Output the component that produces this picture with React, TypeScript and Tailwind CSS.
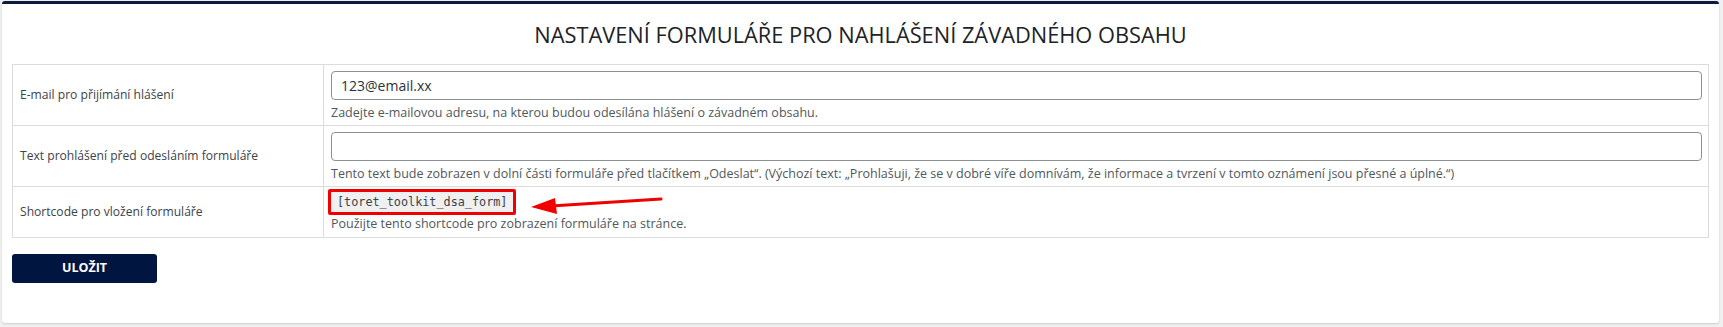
import React from 'react';

const rows = [
  {
    label: 'E-mail pro přijímání hlášení',
    value: '123@email.xx',
    hint: 'Zadejte e-mailovou adresu, na kterou budou odesílána hlášení o závadném obsahu.',
  },
  {
    label: 'Text prohlášení před odesláním formuláře',
    value: '',
    hint: 'Tento text bude zobrazen v dolní části formuláře před tlačítkem „Odeslat“. (Výchozí text: „Prohlašuji, že se v dobré víře domnívám, že informace a tvrzení v tomto oznámení jsou přesné a úplné.“)',
  },
];

export default function App() {
  return (
    <div className="h-[327px] bg-[#f0f0f1] pl-[2px] pr-[4px] pt-[1px] font-['Open_Sans',sans-serif] text-[#3c434a]">
      <div className="h-[322px] rounded-[3px] border-t-[3px] border-[#0b1a3d] bg-white px-[10px] shadow-[0_1px_2px_rgba(0,0,0,0.15)]">
        {/* Title */}
        <div className="flex h-[60px] items-center justify-center pt-[2px]">
          <h1 className="text-[21.8px] font-medium leading-none text-[#1d2327]">NASTAVENÍ FORMULÁŘE PRO NAHLÁŠENÍ ZÁVADNÉHO OBSAHU</h1>
        </div>

        {/* Settings table */}
        <table className="w-full border-collapse border border-[#dcdcde]">
          <tbody>
            {rows.map((row) => (
              <tr key={row.label} className="border-b border-[#dcdcde]">
                <td className="w-[311px] border-r border-[#dcdcde] px-[7px] align-middle text-[12.1px]">{row.label}</td>
                <td className="px-[7px] pr-[6px] pb-[6px] pt-[6px] align-top">
                  <div className="flex h-[29px] items-center rounded-[4px] border border-[#8c8f94] px-[9px] text-[14px] text-[#2c3338]">
                    {row.value}
                  </div>
                  <p className="h-[19px] pt-[5px] text-[12.5px] leading-[16px] text-[#50575e]">{row.hint}</p>
                </td>
              </tr>
            ))}
            <tr>
              <td className="w-[311px] border-r border-[#dcdcde] px-[7px] align-middle text-[12.1px]">Shortcode pro vložení formuláře</td>
              <td className="px-[7px] pb-[6px] pt-[5px] align-top">
                <div className="relative w-fit">
                  <code className="block bg-[#f0f0f1] px-[6px] py-[2px] font-['DejaVu_Sans_Mono',monospace] text-[11.8px] leading-[16px] text-[#3c434a]">
                    [toret_toolkit_dsa_form]
                  </code>
                  <div className="absolute -inset-x-[3px] -inset-y-[3px] rounded-[2px] border-[3px] border-[#f00000]" />
                  <svg className="absolute left-[200px] top-[2px]" width="132" height="20" viewBox="0 0 132 20">
                    <line x1="20" y1="12" x2="130" y2="5" stroke="#f00000" strokeWidth="3" strokeLinecap="round" />
                    <polygon points="0,13 24,4 26,20" fill="#f00000" />
                  </svg>
                </div>
                <p className="h-[19px] pt-[4px] text-[12.5px] leading-[16px] text-[#50575e]">Použijte tento shortcode pro zobrazení formuláře na stránce.</p>
              </td>
            </tr>
          </tbody>
        </table>

        <button className="mt-[16px] h-[29px] w-[145px] rounded-[3px] bg-[#001540] text-[12.5px] font-bold text-white">ULOŽIT</button>
      </div>
    </div>
  );
}
